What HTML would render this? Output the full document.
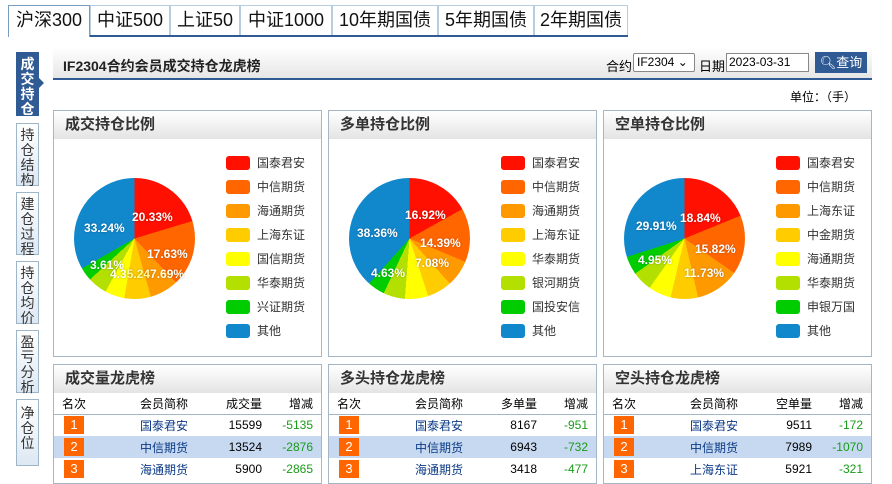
<!DOCTYPE html><html><head><meta charset="utf-8"><style>
*{box-sizing:border-box;margin:0;padding:0}
body{width:892px;height:479px;overflow:hidden;background:#fff;font-family:"Liberation Sans","Noto Sans CJK SC",sans-serif;position:relative;font-size:12px;color:#000}
.a{position:absolute}
.tab{position:absolute;top:5px;height:30px;border:1px solid #b8cde0;border-bottom:none;font-size:18px;line-height:28px;text-align:center;background:#fff;color:#111}
.tabline{position:absolute;left:8px;top:35px;width:620px;height:2px;background:#2f5a93}
.side{position:absolute;left:16px;width:23px;border:1px solid #9fb5c8;background:linear-gradient(#fff,#dde8f3);font-size:14px;line-height:15px;text-align:center;color:#333;padding-top:4px}
.hdr{position:absolute;left:53px;top:47px;width:819px;height:33px;background:linear-gradient(#fff,#e6e6e6);border-bottom:2px solid #2f5a93}
.panel{position:absolute;border:1px solid #a5b6c6;background:#fff}
.ph{height:28px;background:linear-gradient(#fff,#e4e4e4);font-size:15px;font-weight:bold;color:#333;line-height:28px;padding-left:11px}
.pie{position:absolute;left:20px;top:67px;width:121px;height:121px;border-radius:50%}
.lg{position:absolute;left:172px;font-size:12px;color:#333;line-height:14px}
.lg i{display:inline-block;width:24px;height:14px;border-radius:3px;vertical-align:top;margin-right:7px}
.pl{position:absolute;color:#fff;font-size:12px;font-weight:bold;text-shadow:0 0 2px rgba(0,0,0,.3)}
table{border-collapse:collapse;width:100%;font-size:12px}
td{height:22px;padding:0}
tr.h td{height:21px;border-bottom:1px solid #a5b6c6;color:#000}
.b{display:inline-block;width:20px;height:18px;background:#f60;color:#fff;text-align:center;line-height:18px;font-size:13px}
.n{color:#0b3a86;text-align:center}
.r{text-align:right}
.g{color:#1a9a1a;text-align:right;padding-right:8px}
tr.s td{background:#c6d9f0}
</style></head><body>
<div class="tab" style="left:8px;width:82px;border-color:#7a9cc0;height:32px;z-index:2">沪深300</div>
<div class="tab" style="left:90px;width:80px">中证500</div>
<div class="tab" style="left:170px;width:70px">上证50</div>
<div class="tab" style="left:240px;width:92px">中证1000</div>
<div class="tab" style="left:332px;width:106px">10年期国债</div>
<div class="tab" style="left:438px;width:96px">5年期国债</div>
<div class="tab" style="left:534px;width:94px">2年期国债</div>
<div class="tabline"></div>

<div class="side" style="top:52px;height:64px;background:#2f5a93;color:#fff;font-weight:bold;border-color:#2f5a93">成<br>交<br>持<br>仓</div>
<div class="a" style="left:39px;top:78px;border:5px solid transparent;border-left-color:#2f5a93"></div>
<div class="side" style="top:123px;height:63px">持<br>仓<br>结<br>构</div>
<div class="side" style="top:192px;height:63px">建<br>仓<br>过<br>程</div>
<div class="side" style="top:261px;height:63px">持<br>仓<br>均<br>价</div>
<div class="side" style="top:330px;height:63px">盈<br>亏<br>分<br>析</div>
<div class="side" style="top:399px;height:67px;padding-top:6px">净<br>仓<br>位</div>

<div class="hdr">
<div class="a" style="left:10px;top:9px;font-size:14px;font-weight:bold;color:#222">IF2304合约会员成交持仓龙虎榜</div>
<div class="a" style="left:553px;top:9px;font-size:13px">合约</div>
<div class="a" style="left:580px;top:6px;width:62px;height:19px;border:1px solid #888;background:#fff;font-size:12px;line-height:17px;padding-left:3px;border-radius:2px">IF2304 ⌄</div>
<div class="a" style="left:646px;top:9px;font-size:13px">日期</div>
<div class="a" style="left:673px;top:6px;width:83px;height:19px;border:1px solid #888;background:#fff;font-size:12px;line-height:17px;padding-left:2px">2023-03-31</div>
<div class="a" style="left:762px;top:5px;width:52px;height:21px;background:#2f5a93;color:#fff;font-size:13px;line-height:21px;text-align:center">🔍︎查询</div>
</div>
<div class="a" style="left:790px;top:88px;font-size:12px">单位：（手）</div>

<div class="panel" style="left:53px;top:110px;width:269px;height:247px"><div class="ph">成交持仓比例</div>
<div class="pie" style="background:conic-gradient(#ff1000 0 20.33%,#ff6600 0 37.96%,#ff9900 0 45.65%,#ffcc00 0 52.71%,#ffff00 0 57.95%,#b3e000 0 63.15%,#00cc00 0 66.76%,#1188cc 0)"></div>
<div class="pl" style="left:78px;top:99px">20.33%</div><div class="pl" style="left:93px;top:136px">17.63%</div>
<div class="pl" style="left:30px;top:110px">33.24%</div><div class="pl" style="left:36px;top:147px">3.61%</div>
<div class="pl" style="left:56px;top:156px;color:#ffe">4.3<span style="color:#fff8a0">5.24</span>7.69%</div>
<div class="lg" style="top:45px"><i style="background:#ff1000"></i>国泰君安</div>
<div class="lg" style="top:69px"><i style="background:#ff6600"></i>中信期货</div>
<div class="lg" style="top:93px"><i style="background:#ff9900"></i>海通期货</div>
<div class="lg" style="top:117px"><i style="background:#ffcc00"></i>上海东证</div>
<div class="lg" style="top:141px"><i style="background:#ffff00"></i>国信期货</div>
<div class="lg" style="top:165px"><i style="background:#b3e000"></i>华泰期货</div>
<div class="lg" style="top:189px"><i style="background:#00cc00"></i>兴证期货</div>
<div class="lg" style="top:213px"><i style="background:#1188cc"></i>其他</div>
</div>
<div class="panel" style="left:328px;top:110px;width:269px;height:247px"><div class="ph">多单持仓比例</div>
<div class="pie" style="background:conic-gradient(#ff1000 0 16.92%,#ff6600 0 31.31%,#ff9900 0 38.39%,#ffcc00 0 45.01%,#ffff00 0 51.21%,#b3e000 0 57.01%,#00cc00 0 61.64%,#1188cc 0)"></div>
<div class="pl" style="left:76px;top:97px">16.92%</div><div class="pl" style="left:91px;top:125px">14.39%</div>
<div class="pl" style="left:28px;top:115px">38.36%</div><div class="pl" style="left:86px;top:145px">7.08%</div>
<div class="pl" style="left:42px;top:155px">4.63%</div>
<div class="lg" style="top:45px"><i style="background:#ff1000"></i>国泰君安</div>
<div class="lg" style="top:69px"><i style="background:#ff6600"></i>中信期货</div>
<div class="lg" style="top:93px"><i style="background:#ff9900"></i>海通期货</div>
<div class="lg" style="top:117px"><i style="background:#ffcc00"></i>上海东证</div>
<div class="lg" style="top:141px"><i style="background:#ffff00"></i>华泰期货</div>
<div class="lg" style="top:165px"><i style="background:#b3e000"></i>银河期货</div>
<div class="lg" style="top:189px"><i style="background:#00cc00"></i>国投安信</div>
<div class="lg" style="top:213px"><i style="background:#1188cc"></i>其他</div>
</div>
<div class="panel" style="left:603px;top:110px;width:269px;height:247px"><div class="ph">空单持仓比例</div>
<div class="pie" style="background:conic-gradient(#ff1000 0 18.84%,#ff6600 0 34.66%,#ff9900 0 46.39%,#ffcc00 0 53.69%,#ffff00 0 59.79%,#b3e000 0 65.14%,#00cc00 0 70.09%,#1188cc 0)"></div>
<div class="pl" style="left:76px;top:100px">18.84%</div><div class="pl" style="left:91px;top:131px">15.82%</div>
<div class="pl" style="left:32px;top:108px">29.91%</div><div class="pl" style="left:80px;top:155px">11.73%</div>
<div class="pl" style="left:34px;top:142px">4.95%</div>
<div class="lg" style="top:45px"><i style="background:#ff1000"></i>国泰君安</div>
<div class="lg" style="top:69px"><i style="background:#ff6600"></i>中信期货</div>
<div class="lg" style="top:93px"><i style="background:#ff9900"></i>上海东证</div>
<div class="lg" style="top:117px"><i style="background:#ffcc00"></i>中金期货</div>
<div class="lg" style="top:141px"><i style="background:#ffff00"></i>海通期货</div>
<div class="lg" style="top:165px"><i style="background:#b3e000"></i>华泰期货</div>
<div class="lg" style="top:189px"><i style="background:#00cc00"></i>申银万国</div>
<div class="lg" style="top:213px"><i style="background:#1188cc"></i>其他</div>
</div>

<div class="panel" style="left:53px;top:364px;width:269px;height:120px"><div class="ph">成交量龙虎榜</div>
<table><tr class="h"><td style="padding-left:8px;width:70px">名次</td><td class="n" style="color:#000;width:80px">会员简称</td><td class="r" style="width:58px">成交量</td><td class="g" style="color:#000">增减</td></tr>
<tr><td style="padding-left:10px"><span class="b">1</span></td><td class="n">国泰君安</td><td class="r">15599</td><td class="g">-5135</td></tr>
<tr class="s"><td style="padding-left:10px"><span class="b">2</span></td><td class="n">中信期货</td><td class="r">13524</td><td class="g">-2876</td></tr>
<tr><td style="padding-left:10px"><span class="b">3</span></td><td class="n">海通期货</td><td class="r">5900</td><td class="g">-2865</td></tr></table></div>
<div class="panel" style="left:328px;top:364px;width:269px;height:120px"><div class="ph">多头持仓龙虎榜</div>
<table><tr class="h"><td style="padding-left:8px;width:70px">名次</td><td class="n" style="color:#000;width:80px">会员简称</td><td class="r" style="width:58px">多单量</td><td class="g" style="color:#000">增减</td></tr>
<tr><td style="padding-left:10px"><span class="b">1</span></td><td class="n">国泰君安</td><td class="r">8167</td><td class="g">-951</td></tr>
<tr class="s"><td style="padding-left:10px"><span class="b">2</span></td><td class="n">中信期货</td><td class="r">6943</td><td class="g">-732</td></tr>
<tr><td style="padding-left:10px"><span class="b">3</span></td><td class="n">海通期货</td><td class="r">3418</td><td class="g">-477</td></tr></table></div>
<div class="panel" style="left:603px;top:364px;width:269px;height:120px"><div class="ph">空头持仓龙虎榜</div>
<table><tr class="h"><td style="padding-left:8px;width:70px">名次</td><td class="n" style="color:#000;width:80px">会员简称</td><td class="r" style="width:58px">空单量</td><td class="g" style="color:#000">增减</td></tr>
<tr><td style="padding-left:10px"><span class="b">1</span></td><td class="n">国泰君安</td><td class="r">9511</td><td class="g">-172</td></tr>
<tr class="s"><td style="padding-left:10px"><span class="b">2</span></td><td class="n">中信期货</td><td class="r">7989</td><td class="g">-1070</td></tr>
<tr><td style="padding-left:10px"><span class="b">3</span></td><td class="n">上海东证</td><td class="r">5921</td><td class="g">-321</td></tr></table></div>
</body></html>
